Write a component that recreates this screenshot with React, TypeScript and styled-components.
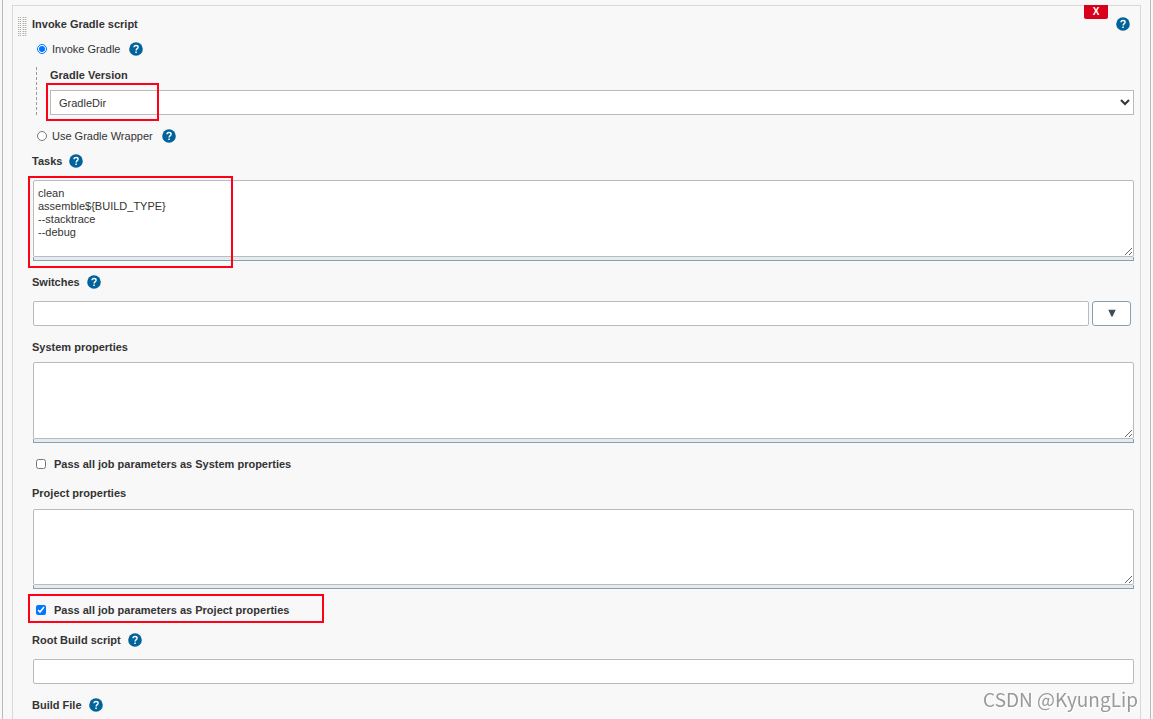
import React, { ReactNode } from "react";
import styled, { createGlobalStyle } from "styled-components";

const GlobalStyle = createGlobalStyle`
  * { box-sizing: border-box; }
  body {
    margin: 0;
    background: #f8f8f8;
    color: #333;
    font: 11px/16px "Liberation Sans", Arial, sans-serif;
  }
  input, select, textarea, button { font: inherit; color: inherit; margin: 0; }
`;

const Shell = styled.main`
  min-height: 100vh;
  margin: 0 2px;
  padding: 5px 9px 0 9px;
  display: flex;
  border-left: 1px solid #bbb;
  border-right: 1px solid #bbb;
`;

const Panel = styled.form`
  position: relative;
  flex: 1;
  min-width: 0;
  padding: 10px 6px 6px 19px;
  border: 1px solid #d9d9d9;
  border-bottom: 0;
`;

const Handle = styled.svg`
  position: absolute;
  left: 5px;
  top: 11px;
`;

const RemoveButton = styled.button`
  position: absolute;
  top: -1px;
  right: 32px;
  width: 24px;
  height: 14px;
  padding: 0;
  border: 0;
  border-radius: 0 0 2px 2px;
  background: #d9001b;
  color: #fff;
  font-size: 10px;
  font-weight: 700;
  line-height: 14px;
`;

const TitleRow = styled.header`
  display: flex;
  align-items: center;
  justify-content: space-between;
  height: 16px;
  padding-right: 4px;
`;

const Title = styled.h2`
  margin: 0;
  font-size: 11px;
  line-height: 16px;
`;

const HelpButton = styled.button`
  width: 14px;
  height: 14px;
  padding: 0;
  border: 0;
  background: none;
  svg { display: block; }
`;

const OptionRow = styled.div<{ $top: number }>`
  display: flex;
  align-items: center;
  height: 16px;
  margin-top: ${(p) => p.$top}px;
  padding-left: 5px;
  gap: 9px;
`;

const Radio = styled.input`
  width: 10px;
  height: 10px;
  & + label { margin-left: -4px; }
`;

const Nested = styled.div`
  position: relative;
  margin: 10px 0 0 4px;
  padding-left: 13px;
  border-left: 1px dashed #999;
`;

const Field = styled.section<{ $top?: number }>`
  position: relative;
  margin-top: ${(p) => p.$top ?? 13}px;
`;

const LabelRow = styled.div<{ $bottom?: number }>`
  display: flex;
  align-items: center;
  gap: 7px;
  height: 16px;
  margin-bottom: ${(p) => p.$bottom ?? 11}px;
  font-weight: 700;
`;

const Select = styled.select`
  display: block;
  width: 100%;
  height: 25px;
  padding: 0 4px;
  border: 1px solid #bbb;
  border-radius: 0;
  background: #fff;
`;

const TextBox = styled.input`
  display: block;
  flex: 1;
  min-width: 0;
  height: 25px;
  padding: 0 5px;
  border: 1px solid #bbb;
  border-radius: 2px;
  background: #fff;
`;

const ControlRow = styled.div`
  display: flex;
  gap: 3px;
  margin-left: 1px;
`;

const ExpandButton = styled.button`
  display: flex;
  align-items: center;
  justify-content: center;
  width: 39px;
  height: 25px;
  margin-right: 3px;
  padding: 0 0 2px;
  border: 1px solid #8aa0ae;
  border-radius: 3px;
  background: #fff;
`;

const AreaWrap = styled.div<{ $height: number }>`
  display: flex;
  flex-direction: column;
  height: ${(p) => p.$height}px;
  margin-left: 1px;
`;

const Area = styled.textarea`
  display: block;
  flex: 1;
  width: 100%;
  padding: 6px 5px 6px 4px;
  border: 1px solid #bbb;
  border-radius: 2px;
  background: #fff;
  line-height: 13px;
  resize: vertical;
`;

const AreaGrip = styled.div`
  height: 4px;
  border: 1px solid #8aa0ae;
  border-top: 0;
  background: #e4ecf1;
`;

const TickRow = styled.div`
  position: relative;
  display: flex;
  align-items: center;
  height: 16px;
  margin-top: 13px;
  padding-left: 4px;
  gap: 8px;
  font-weight: 700;
`;

const Tick = styled.input`
  width: 10px;
  height: 10px;
`;

const Highlight = styled.div<{ $x: number; $y: number; $w: number; $h: number }>`
  position: absolute;
  left: ${(p) => p.$x}px;
  top: ${(p) => p.$y}px;
  width: ${(p) => p.$w}px;
  height: ${(p) => p.$h}px;
  border: 2px solid #ff0019;
  pointer-events: none;
`;

const Watermark = styled.div`
  position: fixed;
  right: 15px;
  bottom: 8px;
  color: #999;
  font: 400 19px/24px "Noto Sans CJK SC", "Noto Sans", sans-serif;
  text-shadow: 1px 1px 0 #fff;
`;

function Help({ topic }: { topic: string }) {
  return (
    <HelpButton type="button" aria-label={`Help for ${topic}`}>
      <svg width="14" height="14" viewBox="0 0 14 14">
        <circle cx="7" cy="7" r="6.8" fill="#00639a" />
        <path
          d="M5 5.3C5 4.2 5.8 3.5 7 3.5S9.1 4.2 9.1 5.2C9.1 6.6 7.1 6.7 7.1 8.5"
          fill="none"
          stroke="#fff"
          strokeWidth="1.4"
        />
        <rect x="6.3" y="9.5" width="1.5" height="1.5" fill="#fff" />
      </svg>
    </HelpButton>
  );
}

function DragHandle() {
  return (
    <Handle width="9" height="20" viewBox="0 0 9 20" aria-hidden="true">
      {[0, 2, 5, 7].map((x) => (
        <path key={x} d={`M${x + 0.5} 0V20`} stroke="#b0b0aa" strokeDasharray="1 1" />
      ))}
      {[1, 4, 6, 8].map((x) => (
        <path key={x} d={`M${x + 0.5} 0V20`} stroke="#dededb" strokeDasharray="1 1" />
      ))}
    </Handle>
  );
}

function FieldLabel(props: { id: string; children: ReactNode; help?: boolean; bottom?: number }) {
  return (
    <LabelRow $bottom={props.bottom}>
      <label htmlFor={props.id}>{props.children}</label>
      {props.help && <Help topic={String(props.children)} />}
    </LabelRow>
  );
}

function TextArea({ id, value, height }: { id: string; value?: string; height: number }) {
  return (
    <AreaWrap $height={height}>
      <Area id={id} defaultValue={value} spellCheck={false} />
      <AreaGrip />
    </AreaWrap>
  );
}

export default function App() {
  return (
    <>
      <GlobalStyle />
      <Shell>
        <Panel>
          <DragHandle />
          <RemoveButton type="button" aria-label="Remove step">X</RemoveButton>
          <TitleRow>
            <Title>Invoke Gradle script</Title>
            <Help topic="Invoke Gradle script" />
          </TitleRow>

          <OptionRow $top={9}>
            <Radio type="radio" name="launcher" id="gradle" defaultChecked />
            <label htmlFor="gradle">Invoke Gradle</label>
            <Help topic="Invoke Gradle" />
          </OptionRow>
          <Nested>
            <FieldLabel id="version" bottom={7}>Gradle Version</FieldLabel>
            <Select id="version">
              <option>GradleDir</option>
            </Select>
            <Highlight $x={9} $y={16} $w={113} $h={38} />
          </Nested>
          <OptionRow $top={13}>
            <Radio type="radio" name="launcher" id="wrapper" />
            <label htmlFor="wrapper">Use Gradle Wrapper</label>
            <Help topic="Use Gradle Wrapper" />
          </OptionRow>

          <Field $top={9}>
            <FieldLabel id="tasks" help>Tasks</FieldLabel>
            <TextArea
              id="tasks"
              height={81}
              value={"clean\nassemble${BUILD_TYPE}\n--stacktrace\n--debug"}
            />
            <Highlight $x={-4} $y={23} $w={205} $h={92} />
          </Field>

          <Field>
            <FieldLabel id="switches" help>Switches</FieldLabel>
            <ControlRow>
              <TextBox id="switches" type="text" />
              <ExpandButton type="button" aria-label="Expand switches">
                <svg width="8" height="8" viewBox="0 0 8 8">
                  <path d="M0.3 0.8H7.7L4.6 7.6H3.4Z" fill="#3f4b55" />
                </svg>
              </ExpandButton>
            </ControlRow>
          </Field>

          <Field>
            <FieldLabel id="system" bottom={7}>System properties</FieldLabel>
            <TextArea id="system" height={81} />
            <TickRow>
              <Tick type="checkbox" id="passSystem" />
              <label htmlFor="passSystem">Pass all job parameters as System properties</label>
            </TickRow>
          </Field>

          <Field>
            <FieldLabel id="project" bottom={8}>Project properties</FieldLabel>
            <TextArea id="project" height={80} />
            <TickRow>
              <Tick type="checkbox" id="passProject" defaultChecked />
              <label htmlFor="passProject">Pass all job parameters as Project properties</label>
              <Highlight $x={-4} $y={-8} $w={296} $h={29} />
            </TickRow>
          </Field>

          <Field $top={14}>
            <FieldLabel id="root-script" help>Root Build script</FieldLabel>
            <ControlRow>
              <TextBox id="root-script" type="text" />
            </ControlRow>
          </Field>

          <Field>
            <LabelRow $bottom={0}>
              <span>Build File</span>
              <Help topic="Build File" />
            </LabelRow>
          </Field>
        </Panel>
      </Shell>
      <Watermark>CSDN @KyungLip</Watermark>
    </>
  );
}
